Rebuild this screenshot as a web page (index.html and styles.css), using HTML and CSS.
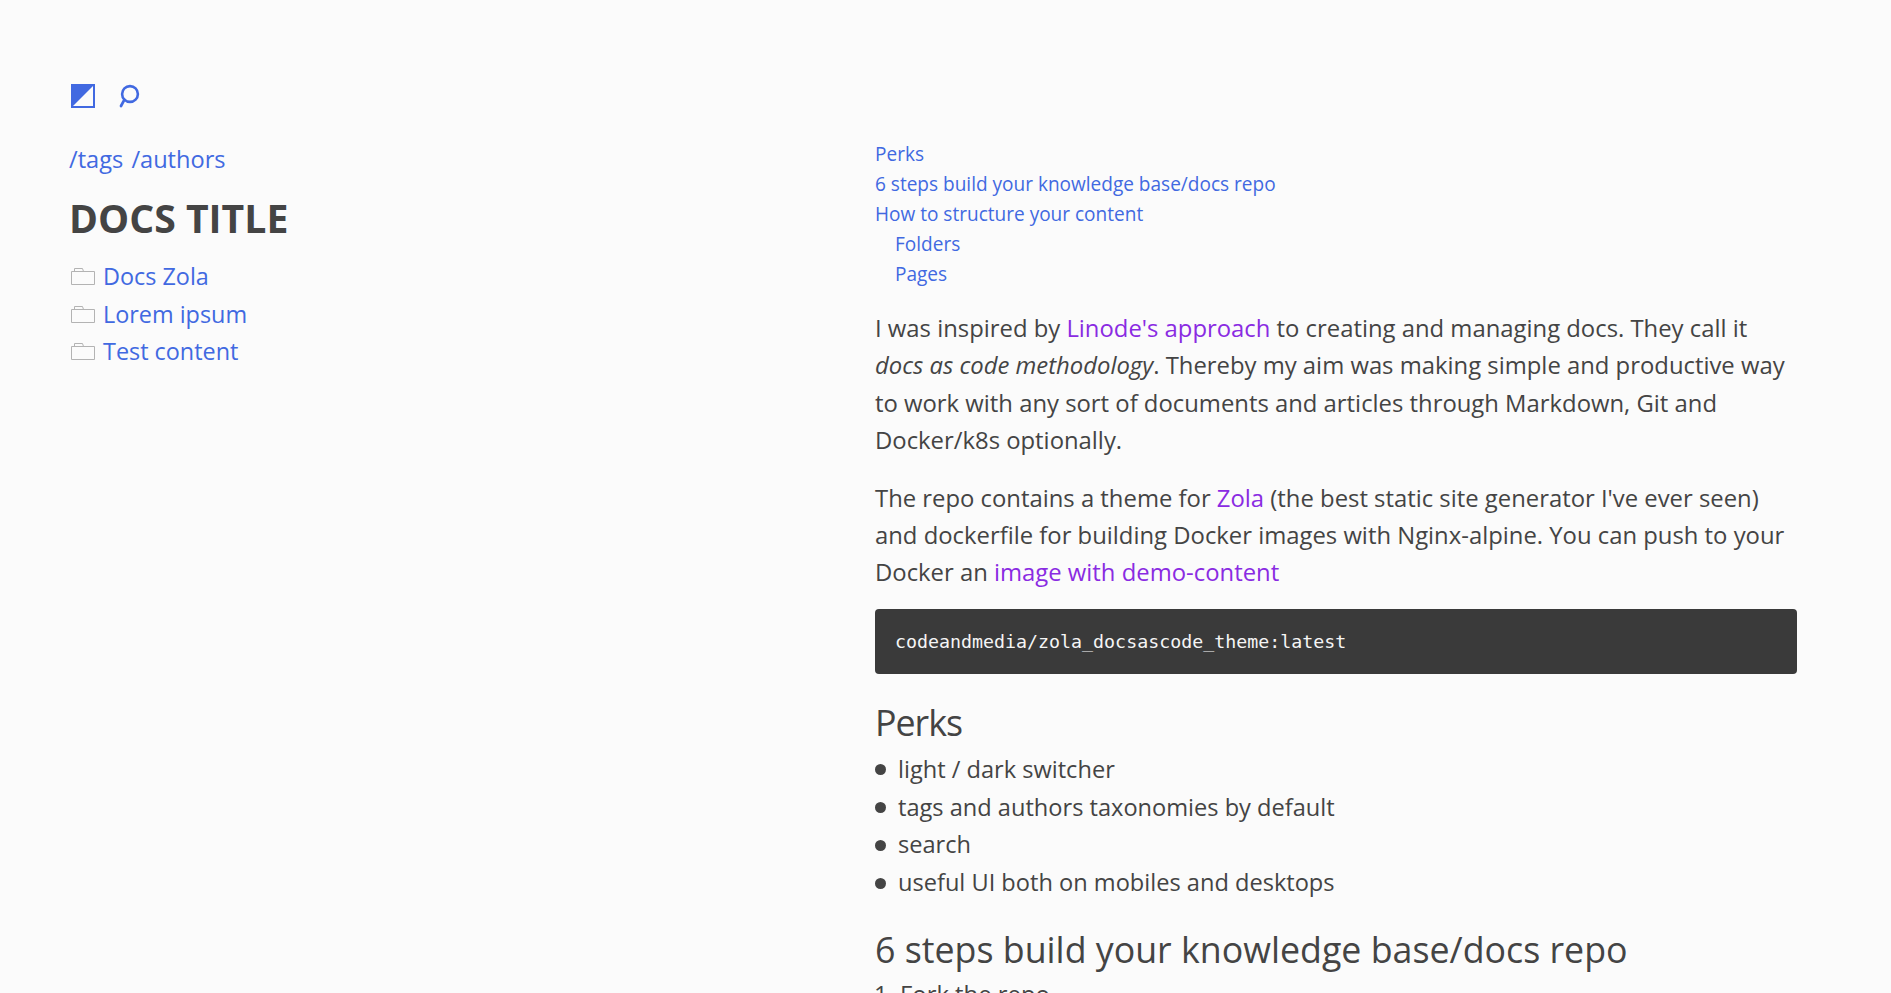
FILE: index.html
```html
<!DOCTYPE html>
<html lang="en">
<head>
<meta charset="utf-8">
<title>Docs Title</title>
<link rel="stylesheet" href="styles.css">
</head>
<body>
<div class="layout">
  <aside class="side">
    <div class="tools">
      <svg class="icon-theme" width="24" height="24" viewBox="0 0 24 24"><rect x="1" y="1" width="22" height="22" fill="none" stroke="#4169e1" stroke-width="2"/><path d="M1 1H23L1 23Z" fill="#4169e1"/></svg>
      <svg class="icon-search" width="22" height="24" viewBox="0 0 22 24"><circle cx="12" cy="10" r="7.9" fill="none" stroke="#4169e1" stroke-width="2.6"/><path d="M6.4 15.6L3 22" fill="none" stroke="#4169e1" stroke-width="2.7" stroke-linecap="round"/></svg>
    </div>
    <nav class="crumbs"><a href="#">/tags</a> <a href="#">/authors</a></nav>
    <h1 class="title">DOCS TITLE</h1>
    <ul class="tree">
      <li><svg class="folder" width="24" height="18" viewBox="0 0 24 18"><path d="M.5 4.5H23.5V17.5H.5ZM3.5 4.5V1.5H11.5L12.5 4.5" fill="none" stroke="#b3b3b3"/></svg><a href="#">Docs Zola</a></li>
      <li><svg class="folder" width="24" height="18" viewBox="0 0 24 18"><path d="M.5 4.5H23.5V17.5H.5ZM3.5 4.5V1.5H11.5L12.5 4.5" fill="none" stroke="#b3b3b3"/></svg><a href="#">Lorem ipsum</a></li>
      <li><svg class="folder" width="24" height="18" viewBox="0 0 24 18"><path d="M.5 4.5H23.5V17.5H.5ZM3.5 4.5V1.5H11.5L12.5 4.5" fill="none" stroke="#b3b3b3"/></svg><a href="#">Test content</a></li>
    </ul>
  </aside>
  <main class="content">
    <ul class="toc">
      <li><a href="#">Perks</a></li>
      <li><a href="#">6 steps build your knowledge base/docs repo</a></li>
      <li><a href="#">How to structure your content</a>
        <ul class="toc-sub">
          <li><a href="#">Folders</a></li>
          <li><a href="#">Pages</a></li>
        </ul>
      </li>
    </ul>
    <p>I was inspired by <a class="ext" href="#">Linode's approach</a> to creating and managing docs. They call it <em>docs as code methodology</em>. Thereby my aim was making simple and productive way to work with any sort of documents and articles through Markdown, Git and Docker/k8s optionally.</p>
    <p>The repo contains a theme for <a class="ext" href="#">Zola</a> (the best static site generator I've ever seen) and dockerfile for building Docker images with Nginx-alpine. You can push to your Docker an <a class="ext" href="#">image with demo-content</a></p>
    <pre class="code"><code>codeandmedia/zola_docsascode_theme:latest</code></pre>
    <h2 class="tight">Perks</h2>
    <ul class="bullets">
      <li>light / dark switcher</li>
      <li>tags and authors taxonomies by default</li>
      <li>search</li>
      <li>useful UI both on mobiles and desktops</li>
    </ul>
    <h2>6 steps build your knowledge base/docs repo</h2>
    <ol class="steps">
      <li>Fork the repo</li>
    </ol>
  </main>
</div>
</body>
</html>
```
FILE: styles.css
```css
html { overflow: hidden; height: 100%; }
body {
  margin: 0;
  height: 100%;
  overflow: hidden;
  background: #fbfbfb;
  color: #444;
  font-family: "Open Sans", "Noto Sans", sans-serif;
  font-size: 23.85px;
  line-height: 37.4px;
}
a { color: #4169e1; text-decoration: none; }
a.ext { color: #8a2be2; }
.layout { display: grid; grid-template-columns: 875px 922px; padding-top: 139px; }
.side { margin-top: -55px; padding-left: 69px; }
.tools { display: flex; align-items: center; gap: 23px; height: 24px; margin-bottom: 33px; padding-left: 2px; }
.crumbs { font-size: 23.6px; word-spacing: 2px; }
.title { margin: 15px 0 15px; font-size: 39.2px; line-height: 50px; font-weight: 700; color: #444; }
.tree { list-style: none; margin: 0; padding: 0; font-size: 23.4px; }
.tree li { display: flex; align-items: center; gap: 8px; }
.folder { flex: none; margin: -2px 0 0 2px; }
.toc { list-style: none; margin: 0 0 21px; padding: 0; font-size: 19.05px; line-height: 30px; }
.toc-sub { list-style: none; margin: 0; padding: 0 0 0 20px; }
p { margin: 0 0 20px; }
.code { margin: -3px 0 24px; padding: 20px; background: #3a3a3a; border-radius: 4px; color: #f5f5f5; font: 18.3px/25px "DejaVu Sans Mono", monospace; }
h2 { margin: 0 0 3px; font-size: 35.75px; line-height: 48px; font-weight: 400; }
.tight { letter-spacing: -1px; margin-bottom: 5px; }
.bullets { list-style: none; margin: 0 0 23px; padding: 0; font-size: 23.6px; line-height: 37.8px; }
.bullets li { display: flex; align-items: center; gap: 12px; }
.bullets li::before { content: ""; width: 11px; height: 11px; border-radius: 50%; background: #444; flex: none; }
.steps { margin: 0; padding: 0 0 0 25px; }
```
